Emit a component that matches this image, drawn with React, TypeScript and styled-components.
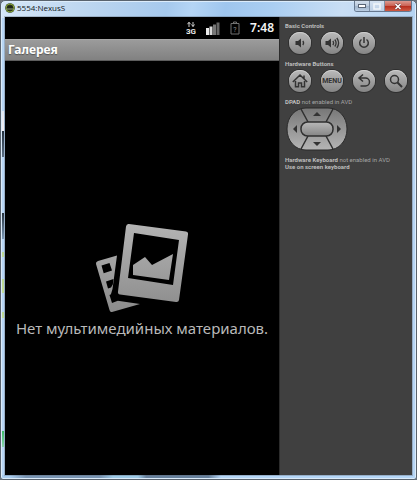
import React from "react";
import styled, { createGlobalStyle } from "styled-components";

const GlobalStyle = createGlobalStyle`
  *, *::before, *::after { box-sizing: border-box; }
  body { margin: 0; background: #6a7078; }
  button { font: inherit; border: 0; padding: 0; margin: 0; cursor: pointer; }
  svg { display: block; }
`;

const Frame = styled.div`
  display: flex;
  flex-direction: column;
  min-height: 100vh;
  padding: 0 4px 4px;
  border: 1px solid #59636e;
  border-radius: 5px 5px 3px 3px;
  box-shadow: inset 0 0 0 1px #dcecfb;
  background:
    linear-gradient(#23303e, #5c6f84) 1px 130px / 2px 26px no-repeat,
    linear-gradient(#e3e9f3, #f1eef3) 1px 110px / 2px 20px no-repeat,
    linear-gradient(#26323d, #7f9cba) 1px 212px / 2px 26px no-repeat,
    linear-gradient(#bcd894, #c3dc98) 1px 251px / 2px 5px no-repeat,
    linear-gradient(#bcd894, #c3dc98) 1px 278px / 2px 14px no-repeat,
    linear-gradient(#bcd894, #c3dc98) 1px 311px / 2px 6px no-repeat,
    linear-gradient(#3cbb68, #8ad5ac) 1px 430px / 2px 16px no-repeat,
    linear-gradient(90deg, #a9cdf0 0 2%, #7995b3 6% 24%, #9cc9e6 27% 33%, #66809c 35% 50%, #b5d6f7 53%) 0 100% / 100% 4px no-repeat,
    linear-gradient(100deg, #d5e6f7 0, #b9d4ef 24%, #a6c9ed 40%, #b5d5f5 46%, #9fc6ee 54%, #aacef2 65%, #c9def4 82%, #b4d3f2 100%) 0 0 / 100% 17px no-repeat,
    #b8d6f5;
`;

const TitleBar = styled.header`
  display: flex;
  align-items: flex-start;
  justify-content: space-between;
  height: 16px;
  flex: none;
`;

const Caption = styled.div`
  display: flex;
  align-items: center;
  gap: 2px;
  height: 14px;
  color: #111820;
  font: 8px/14px "Open Sans", "Noto Sans", sans-serif;
`;

const WindowControls = styled.div`
  display: flex;
  height: 11px;
  border: 1px solid #66788f;
  border-top: 0;
  border-radius: 0 0 3px 3px;
  overflow: hidden;
`;

const controlFill = {
  close: "linear-gradient(#dc9a90 0, #cb6557 45%, #b52c1d 50%, #cf5a42 100%)",
  disabled: "linear-gradient(#d5e2f1, #bccfe5)",
  normal: "linear-gradient(#d3dfed 0, #bccbdd 45%, #9fb3ca 50%, #b9cde3 100%)",
};

const WindowButton = styled.button<{ $kind: keyof typeof controlFill }>`
  display: grid;
  place-items: center;
  width: ${(p) => (p.$kind === "close" ? 26 : 15)}px;
  border-right: ${(p) => (p.$kind === "close" ? "0" : "1px solid #7d8fa6")};
  background: ${(p) => controlFill[p.$kind]};
`;

const Client = styled.div`
  display: grid;
  grid-template-columns: minmax(0, 1fr) 133px;
  flex: 1;
  outline: 1px solid #59636e55;
`;

const Phone = styled.main`
  display: flex;
  flex-direction: column;
  background: #000;
  font-family: "Noto Sans", "Open Sans", sans-serif;
`;

const StatusBar = styled.div`
  display: flex;
  align-items: center;
  justify-content: flex-end;
  height: 22px;
  padding-right: 5px;
`;

const StatusIcons = styled.div`
  display: flex;
  align-items: center;
  gap: 10px;
  margin-right: 10px;
`;

const Clock = styled.time`
  color: #f4f4f4;
  font-size: 12px;
  line-height: 22px;
  font-weight: 600;
`;

const AppTitle = styled.h1`
  margin: 0;
  padding: 0 3px;
  height: 22px;
  border-top: 1px solid #a6a6a6;
  border-bottom: 1px solid #5d5d5d;
  background: linear-gradient(#9b9b9b, #818181);
  color: #fff;
  font-size: 12px;
  line-height: 20px;
  font-weight: 700;
  text-shadow: 0 1px 1px #555;
`;

const EmptyState = styled.section`
  display: flex;
  flex: 1;
  flex-direction: column;
  align-items: center;
  justify-content: center;
  gap: 4px;
  padding-top: 26px;
`;

const EmptyText = styled.p`
  margin: 0;
  color: #b9b9b9;
  font-size: 15px;
  line-height: 22px;
  white-space: nowrap;
`;

const Panel = styled.aside`
  padding: 5px 5px 0;
  border-left: 1px solid #2c2c2c;
  background: #404040;
  color: #a4a4a4;
  font: 6px/7px Roboto, "Liberation Sans", sans-serif;
`;

const Group = styled.section`
  margin-bottom: 4px;
`;

const Label = styled.h2`
  margin: 0;
  font-size: inherit;
  line-height: inherit;
  font-weight: 400;
  white-space: nowrap;
  b { color: #bdbdbd; font-weight: 700; }
`;

const ButtonRow = styled.div`
  display: grid;
  grid-template-columns: repeat(4, 22px);
  gap: 10px;
  padding: 3px 0 2px 4px;
`;

const RoundButton = styled.button`
  display: grid;
  place-items: center;
  width: 22px;
  height: 22px;
  border-radius: 50%;
  background: linear-gradient(#bababa, #858585);
  box-shadow: 0 0 0 1px #2f2f2f, inset 0 1px 0 #cecece;
  color: #333;
  font-size: 7px;
  font-weight: 700;
`;

const Dpad = styled.svg`
  margin: 2px 0 5px 1px;
`;

function Glyph({ children }: { children: React.ReactNode }) {
  return (
    <svg width="18" height="18" viewBox="0 0 18 18" fill="none" stroke="#333" strokeWidth="1.3" aria-hidden="true">
      {children}
    </svg>
  );
}

const AndroidBadge = () => (
  <svg width="10" height="10" viewBox="0 0 10 10" aria-hidden="true">
    <circle cx="5" cy="5" r="4.8" fill="#2e3a1c" />
    <circle cx="5" cy="5" r="4" fill="none" stroke="#8aa63b" strokeWidth="1" />
    <path d="M2 5.4a3 2.6 0 0 1 6 0z" fill="#1d2415" />
    <path d="M1.8 6h6.4" stroke="#a9b69a" strokeWidth="0.8" />
  </svg>
);

const NetworkIcon = () => (
  <svg width="10" height="14" viewBox="0 0 10 14" aria-label="3G" role="img">
    <path d="M3 6V1.500M1.500 3.200l1.500-2L4.500 3.200M7 1v4.500M5.500 3.500l1.500 2L8.500 3.500" fill="none" stroke="#cfcfcf" strokeWidth="1" />
    <text x="5" y="13" textAnchor="middle" fill="#e8e8e8" fontFamily="Roboto, sans-serif" fontWeight="700" fontSize="8">3G</text>
  </svg>
);

const SignalIcon = () => (
  <svg width="14" height="13" viewBox="0 0 14 13" aria-hidden="true">
    <path d="M0 6h3v7H0z" fill="#ececec" />
    <path d="M3.500 4.500h3V13h-3z" fill="#d8d8d8" />
    <path d="M7 2.500h3V13H7z" fill="#777" />
    <path d="M10.500 .5h3V13h-3z" fill="#666" />
  </svg>
);

const BatteryIcon = () => (
  <svg width="10" height="14" viewBox="0 0 10 14" aria-hidden="true">
    <path d="M1 2.500h8v10.500H1zM3.500 2.500v-1.500h3v1.500" fill="none" stroke="#707070" strokeWidth="1" />
    <text x="5" y="10.500" textAnchor="middle" fill="#8c8c8c" fontFamily="Roboto, sans-serif" fontSize="7">?</text>
  </svg>
);

const PhotosIcon = () => (
  <svg width="94" height="90" viewBox="0 0 94 90" aria-hidden="true">
    <defs>
      <linearGradient id="photoFill" x1="0" y1="0" x2="0" y2="90" gradientUnits="userSpaceOnUse">
        <stop offset="0" stopColor="#b4b4b4" />
        <stop offset="1" stopColor="#8b8b8b" />
      </linearGradient>
    </defs>
    <g fill="url(#photoFill)">
      <path d="M1 41Q0.500 39 3 38L22 32.500 17.500 66 16 71Q15.500 76 21 77.500L45 81 17 89Q15 89.500 14.500 87Z" />
      <path fillRule="evenodd" d="M34 1 91 8.500q2.500 .5 2 3L84 77q-.5 2.500-3 2L25 71.500q-2.500-.5-2-3L31 3.500q.5-3 3-2.500zM39 10l-6 45 45 7 6-45z" />
      <path d="M38 42l12-8 7 8 21-11-4 26-36-5z" />
    </g>
    <path d="M6.500 42.500l8-2.500 2.500 7.500-8.300 2.800zM11 58.500l7.500-2.500-.7 5.500-1.800 3-3 1zM14.500 72l2-1q0 4.500 5 6l2 .5-6.500 2.500z" fill="#000" />
  </svg>
);

function DirectionPad() {
  return (
    <Dpad width="62" height="44" viewBox="0 0 62 44" role="img" aria-label="DPAD">
      <defs>
        <linearGradient id="padFill" x1="0" y1="0" x2="0" y2="1">
          <stop offset="0" stopColor="#777" />
          <stop offset="1" stopColor="#b5b5b5" />
        </linearGradient>
        <linearGradient id="centerFill" x1="0" y1="0" x2="0" y2="1">
          <stop offset="0" stopColor="#b9b9b9" />
          <stop offset="1" stopColor="#858585" />
        </linearGradient>
      </defs>
      <path d="M20 1H42C53 1 61 10 61 22S53 43 42 43H20C9 43 1 34 1 22S9 1 20 1Z" fill="url(#padFill)" stroke="#292929" />
      <path d="M15 2l7 13M47 2l-7 13M15 42l7-13M47 42l-7-13" stroke="#303030" strokeWidth="1.5" />
      <rect x="15" y="15" width="32" height="14" rx="6.500" fill="url(#centerFill)" stroke="#303030" strokeWidth="1.5" />
      <path d="M27 9l4-4 4 4zM27 35l4 4 4-4zM11 18v8l-4-4zM51 18v8l4-4z" fill="#333" />
    </Dpad>
  );
}

export default function App() {
  return (
    <>
      <GlobalStyle />
      <Frame>
        <TitleBar>
          <Caption><AndroidBadge />5554:NexusS</Caption>
          <WindowControls>
            <WindowButton $kind="normal" aria-label="Minimize">
              <svg width="8" height="4" viewBox="0 0 8 4"><rect x=".5" y=".5" width="7" height="3" fill="#fff" stroke="#5a6677" /></svg>
            </WindowButton>
            <WindowButton $kind="disabled" aria-label="Maximize" disabled>
              <svg width="8" height="7" viewBox="0 0 8 7"><rect x="1" y="1" width="6" height="5" fill="none" stroke="#f2f6fa" strokeWidth="1.500" /></svg>
            </WindowButton>
            <WindowButton $kind="close" aria-label="Close">
              <svg width="8" height="7" viewBox="0 0 8 7"><path d="M1.500 1l5 5M6.500 1l-5 5" stroke="#6d3a3c" strokeWidth="2.600" /><path d="M1.500 1l5 5M6.500 1l-5 5" stroke="#fff" strokeWidth="1.500" /></svg>
            </WindowButton>
          </WindowControls>
        </TitleBar>
        <Client>
          <Phone>
            <StatusBar>
              <StatusIcons><NetworkIcon /><SignalIcon /><BatteryIcon /></StatusIcons>
              <Clock>7:48</Clock>
            </StatusBar>
            <AppTitle>Галерея</AppTitle>
            <EmptyState>
              <PhotosIcon />
              <EmptyText>Нет мультимедийных материалов.</EmptyText>
            </EmptyState>
          </Phone>
          <Panel>
            <Group>
              <Label><b>Basic Controls</b></Label>
              <ButtonRow>
                <RoundButton aria-label="Volume down">
                  <Glyph><path d="M4.500 7h2.500L10 4.500v9L7 11h-2.500z" fill="#333" stroke="none" /><path d="M11.800 7q1.600 2 0 4" /></Glyph>
                </RoundButton>
                <RoundButton aria-label="Volume up">
                  <Glyph><path d="M2.500 7h2.500L8 4.500v9L5 11h-2.500z" fill="#333" stroke="none" /><path d="M9.800 7q1.600 2 0 4M11.800 5.500q2.600 3.500 0 7M13.800 4q3.600 5 0 10" /></Glyph>
                </RoundButton>
                <RoundButton aria-label="Power">
                  <Glyph><path d="M9 3v6M6.500 5.500a4.300 4.300 0 1 0 5 0" strokeWidth="1.500" /></Glyph>
                </RoundButton>
              </ButtonRow>
            </Group>
            <Group>
              <Label><b>Hardware Buttons</b></Label>
              <ButtonRow>
                <RoundButton aria-label="Home">
                  <Glyph><path d="M1.800 10 9 3l7.200 7M4.500 9V14.800H7.500V11h3v3.800h3V9M13 6.500V3.500" strokeWidth="1.500" /></Glyph>
                </RoundButton>
                <RoundButton>MENU</RoundButton>
                <RoundButton aria-label="Back">
                  <Glyph><path d="M8 2.500 4 6 8 9.500M4 6H10.500a4 4 0 0 1 0 8H5.500" strokeWidth="1.500" /></Glyph>
                </RoundButton>
                <RoundButton aria-label="Search">
                  <Glyph><circle cx="7.500" cy="7.500" r="4" strokeWidth="1.500" /><path d="m10.500 10.500 4.500 4.500" strokeWidth="2" /></Glyph>
                </RoundButton>
              </ButtonRow>
            </Group>
            <Group>
              <Label><b>DPAD</b> not enabled in AVD</Label>
              <DirectionPad />
            </Group>
            <Label><b>Hardware Keyboard</b> not enabled in AVD<br /><b>Use on screen keyboard</b></Label>
          </Panel>
        </Client>
      </Frame>
    </>
  );
}
